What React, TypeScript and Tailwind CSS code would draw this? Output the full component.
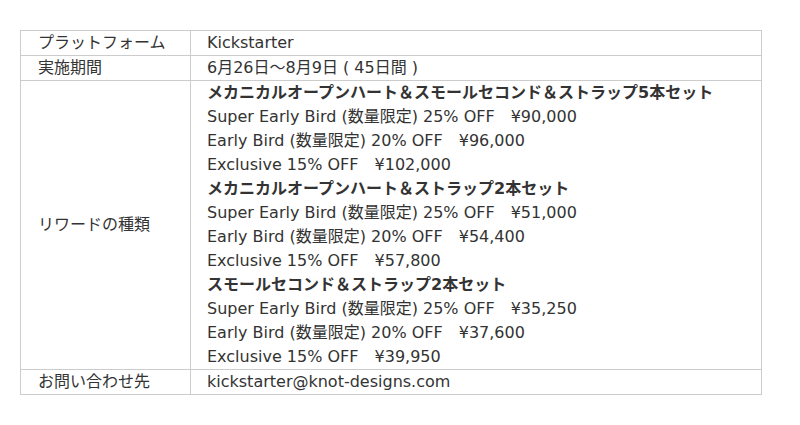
const rewards = [
  {
    title: 'メカニカルオープンハート＆スモールセコンド＆ストラップ5本セット',
    prices: ['¥90,000', '¥96,000', '¥102,000'],
  },
  {
    title: 'メカニカルオープンハート＆ストラップ2本セット',
    prices: ['¥51,000', '¥54,400', '¥57,800'],
  },
  {
    title: 'スモールセコンド＆ストラップ2本セット',
    prices: ['¥35,250', '¥37,600', '¥39,950'],
  },
];

const tiers = ['Super Early Bird (数量限定) 25% OFF', 'Early Bird (数量限定) 20% OFF', 'Exclusive 15% OFF'];

export default function App() {
  return (
    <div className="min-h-[425px] w-[800px] bg-white pt-[30px] px-[20px] font-['DejaVu_Sans','Noto_Sans_CJK_JP',sans-serif] text-[16px] leading-[24px] text-[#333]">
      <table className="w-[742px] border-collapse border border-[#ccc]">
        <tbody>
          <tr>
            <td className="w-[170px] border border-[#ccc] pl-[17px] align-middle">プラットフォーム</td>
            <td className="border border-[#ccc] pl-[16px]">Kickstarter</td>
          </tr>
          <tr>
            <td className="border border-[#ccc] pl-[17px] align-middle">実施期間</td>
            <td className="border border-[#ccc] pl-[16px]">6月26日〜8月9日 ( 45日間 )</td>
          </tr>
          <tr>
            <td className="border border-[#ccc] pl-[17px] align-middle">リワードの種類</td>
            <td className="border border-[#ccc] pl-[16px]">
              {rewards.map((r) => (
                <div key={r.title}>
                  <div className="font-bold">{r.title}</div>
                  {tiers.map((t, i) => (
                    <div key={t}>
                      {t}　{r.prices[i]}
                    </div>
                  ))}
                </div>
              ))}
            </td>
          </tr>
          <tr>
            <td className="border border-[#ccc] pl-[17px] align-middle">お問い合わせ先</td>
            <td className="border border-[#ccc] pl-[16px]">kickstarter@knot-designs.com</td>
          </tr>
        </tbody>
      </table>
    </div>
  );
}
